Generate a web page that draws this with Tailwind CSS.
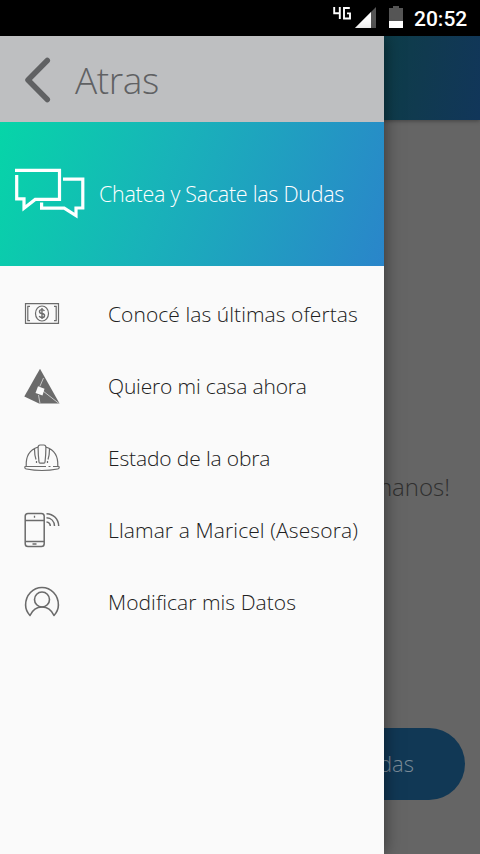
<!DOCTYPE html>
<html lang="es">
<head>
<meta charset="utf-8">
<meta name="viewport" content="width=device-width, initial-scale=1">
<title>Menú</title>
<script src="https://cdn.jsdelivr.net/npm/@tailwindcss/browser@4"></script>
</head>
<body class="h-[854px] w-[480px] overflow-hidden bg-[#656565] font-['Open_Sans',sans-serif]">
<div class="relative flex h-[854px] w-[480px] flex-col overflow-hidden">
  <header class="flex h-9 shrink-0 items-center justify-end bg-black pr-3 text-white">
    <span class="mr-1 mb-[10px] flex">
      <svg class="h-[13px] w-[18px]" viewBox="0 0 18 13" fill="none" stroke="#fff" stroke-width="1.9" aria-label="4G"><path d="M1.2 0v6.2h5.6M6.8 0v12M16.8 1H11v10.5h6V6.4h-3"/></svg>
    </span>
    <svg class="mb-[1px] h-[21px] w-[22px]" viewBox="0 0 22 21"><path d="M21 0v21H0z" fill="#555"/><path d="M16 5v16H0z" fill="#fff"/></svg>
    <svg class="mb-[2px] ml-3 h-[22px] w-[14px]" viewBox="0 0 14 22"><path d="M4 0h6v2h4v20H0V2h4z" fill="#555"/><path d="M0 15h14v7H0z" fill="#fff"/></svg>
    <time class="ml-[11px] w-[54px] whitespace-nowrap pt-px font-['Roboto',sans-serif] text-[21px] leading-9 font-medium">20:52</time>
  </header>
  <main class="flex flex-1 flex-col items-end">
    <div class="flex h-[84px] w-full shrink-0 justify-end shadow-[0_1px_4px_rgba(0,0,0,0.35)]"><div class="h-full w-24 bg-linear-[100deg,#0d3d49,#103a4f_40%,#11365a]"></div></div>
    <p class="mt-[349px] mr-[30px] text-[24px] leading-9 font-light whitespace-nowrap text-[#303030]">en tus manos!</p>
    <div class="mt-[223px] mr-[15px] flex h-[72px] w-[450px] items-center justify-end rounded-full bg-[#113855] pr-[51px] pb-[2px] text-[22px] font-light text-[#7b8b98]">Chatea y Sacate las Dudas</div>
  </main>

  <aside class="absolute top-9 left-0 flex h-[818px] w-96 flex-col bg-[#fafafa] shadow-[0_0_16px_rgba(0,0,0,0.5)]">
    <div class="flex h-[86px] shrink-0 items-center bg-[#bebfc1] pl-6 text-[#606163]">
      <svg class="mt-[1px] h-[46px] w-[27px]" viewBox="0 0 27 46" fill="none" stroke="#606163" stroke-width="5.5" stroke-linecap="round" stroke-linejoin="round"><path d="M23.3 3.5 4 23l19.3 19.5"/></svg>
      <span class="ml-6 pt-[2px] text-[37px] leading-[50px] font-light tracking-[-0.4px]">Atras</span>
    </div>
    <div class="flex h-36 shrink-0 items-center bg-linear-[110deg,#06d5a8,#18b3b9_42%,#2a85ca] pb-[2px] pl-[14px] text-white">
      <svg class="h-[52px] w-[71px]" viewBox="0 0 71 52" fill="none" stroke="#fff" stroke-width="3.2"><path d="M1 3.4h44.5v29H21.2L10 41.2v-9.4H2.7V8M49 12.2h19.8v28.8H62v7.6L50.2 41.2H27.6v-5.7"/></svg>
      <span class="ml-[14px] pt-[2px] text-[21.5px] leading-8 font-light whitespace-nowrap tracking-[-0.28px]">Chatea y Sacate las Dudas</span>
    </div>
    <nav class="flex flex-col pt-3 text-[21px] font-light text-[#202020]">
      <a class="flex h-[72px] items-center pl-6">
        <svg class="h-9 w-9 shrink-0" viewBox="0 0 36 36" fill="none" stroke="#6b6b6b" stroke-width="1.2"><path d="M1.5 7.7h33v19.6h-33zM6 10.3H3.8v14.4H6M30 10.3h2.2v14.4H30"/><ellipse cx="18" cy="17.5" rx="6.5" ry="7.5"/><path d="M20.4 15c-.5-1-1.4-1.4-2.5-1.4-3.2 0-3.2 3.5 0 3.9 3.6.4 3.5 4 0 4-1.3 0-2.2-.5-2.7-1.5M18 12v11" stroke-width="1.4"/></svg>
        <span class="ml-12 pt-[2px] whitespace-nowrap tracking-[0.06px]">Conocé las últimas ofertas</span>
      </a>
      <a class="flex h-[72px] items-center pl-6">
        <svg class="h-9 w-9 shrink-0" viewBox="0 0 36 36"><path d="M16 .8 35.5 35.5H15L.3 28.6z" fill="#6b6b6b"/><path d="m19.5 10-3.7 8.5M19 23l16 12.5M14.500 27 16 35.500" stroke="#c8c8c8"/><path d="m14 18.300 6.500 2.500-2 6.700-7-2.500z" fill="#fafafa"/></svg>
        <span class="ml-12 pt-[2px] whitespace-nowrap tracking-[-0.16px]">Quiero mi casa ahora</span>
      </a>
      <a class="flex h-[72px] items-center pl-6">
        <svg class="mt-[2px] h-9 w-9 shrink-0" viewBox="0 0 36 36" fill="none" stroke="#6b6b6b" stroke-width="1.2" stroke-linejoin="round"><path d="M2.200 25C1.700 15 6.500 8.500 14 6M22 6c7.500 2.500 12.300 9 11.800 19M22 25.500H1.800q-1.100 0-1 1c.1.900.6 1.400 1.600 1.500 10.400 2 20.800 2 31.200 0 1-.1 1.500-.600 1.600-1.500q.1-1-1-1H29M24.500 25.500h2M15 21c-.600-5-.900-9.500-.900-14.500q0-2.500 2-2.500h3.800q2 0 2 2.500c0 5-.300 9.500-.900 14.500q-.100 1.200-1 1.200h-4q-.900 0-1-1.200zM10.500 8c0 4.200.5 7.500 1.500 10.500M25.500 8c0 4.200-.5 7.500-1.500 10.500M12.500 20v2M23.500 20v2"/></svg>
        <span class="ml-12 pt-[2px] whitespace-nowrap tracking-[-0.14px]">Estado de la obra</span>
      </a>
      <a class="flex h-[72px] items-center pl-6">
        <svg class="mb-[1px] h-9 w-9 shrink-0" viewBox="0 0 36 36" fill="none" stroke="#6b6b6b" stroke-width="1.5"><rect x="1.200" y="1.500" width="19" height="33" rx="2.800"/><path d="M1 8.500h19M1 29.500h19M10.500 3.800v2M8.500 32h4" stroke-width="1.300"/><path d="M22.500 1.700c7 .2 12 5.300 12.200 12.300M22.500 5.800c4.700.2 7.800 3.500 8 8.200M22.500 9.900c2.200.2 3.700 1.800 3.800 4.100"/></svg>
        <span class="ml-12 pt-[2px] whitespace-nowrap tracking-[0.11px]">Llamar a Maricel (Asesora)</span>
      </a>
      <a class="flex h-[72px] items-center pl-6">
        <svg class="mt-[2px] h-9 w-9 shrink-0" viewBox="0 0 36 36" fill="none" stroke="#6b6b6b" stroke-width="1.6" stroke-linejoin="round"><circle cx="18" cy="14.500" r="7.500"/><path d="M6 30.500C2.800 27 1.600 23.500 1.600 20 1.600 10 9 2.500 18 2.500s16.400 7.500 16.400 17.500c0 3.500-1.200 7-4.400 10.500C27.500 25 23.500 22 18 22S8.500 25 6 30.500z"/></svg>
        <span class="ml-12 pt-[2px] whitespace-nowrap tracking-[0.05px]">Modificar mis Datos</span>
      </a>
    </nav>
  </aside>
</div>
</body>
</html>
